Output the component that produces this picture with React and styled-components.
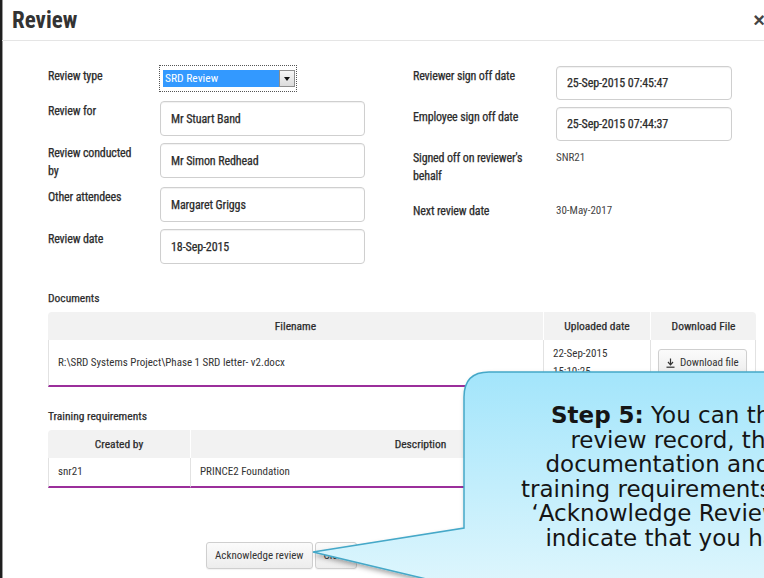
import React from 'react';
import styled, { createGlobalStyle } from 'styled-components';

const NARROW = `"Roboto Condensed", "Liberation Sans Narrow", "Arial Narrow", Roboto, sans-serif`;
const CALLOUT_FONT = `"DejaVu Sans", Verdana, sans-serif`;

const GlobalStyle = createGlobalStyle`
  html, body {
    margin: 0;
    padding: 0;
    background: #fff;
  }
  body {
    overflow: hidden;
    font-family: ${NARROW};
    font-stretch: condensed;
    font-size: 12px;
    color: #333;
  }
`;

const Screen = styled.div`
  position: relative;
  width: 764px;
  height: 578px;
  overflow: hidden;
`;

const Modal = styled.div`
  width: 778px;
  height: 100%;
  border-left: 2px solid #1f1f1f;
  box-shadow: inset 1px 0 0 #9a9a9a;
  background: #fff;
`;

const ModalHeader = styled.div`
  display: flex;
  align-items: center;
  justify-content: space-between;
  height: 41px;
  box-sizing: border-box;
  padding: 0 15px 0 10px;
  border-bottom: 1px solid #e5e5e5;
`;

const Title = styled.h4`
  margin: 0;
  font: bold 23px ${NARROW};
  font-stretch: condensed;
  line-height: 1;
  color: #333;
`;

const CloseMark = styled.span`
  font: bold 20px "Liberation Sans", sans-serif;
  line-height: 1;
  color: #444;
`;

const ModalBody = styled.div`
  padding: 25px 24px 0 46px;
`;

const FormGrid = styled.div`
  display: grid;
  grid-template-columns: 354px 1fr;
`;

const Column = styled.div`
  display: flex;
  flex-direction: column;
  padding-left: ${(p) => p.indent || 0}px;
`;

const Field = styled.div`
  display: grid;
  grid-template-columns: ${(p) => p.labelWidth}px ${(p) => p.fieldWidth}px;
  min-height: ${(p) => p.minHeight || 0}px;
  margin-bottom: 7px;
`;

/* medium-weight condensed text used by labels, inputs and headings */
const Label = styled.div`
  padding: 1px 22px 0 0;
  font-size: 12px;
  letter-spacing: -0.15px;
  line-height: 18px;
  color: #2b2b2b;
  -webkit-text-stroke: 0.25px #2b2b2b;
`;

const StaticValue = styled.div`
  padding-top: 1px;
  font-size: 11px;
  line-height: 18px;
  color: #444;
`;

const TextInput = styled.input`
  box-sizing: border-box;
  width: 100%;
  height: ${(p) => p.h || 35}px;
  padding: 0 10px;
  border: 1px solid #cfcfcf;
  border-radius: 4px;
  box-shadow: inset 0 1px 1px rgba(0, 0, 0, 0.06);
  font: 12px ${NARROW};
  font-stretch: condensed;
  letter-spacing: -0.1px;
  color: #2b2b2b;
  -webkit-text-stroke: 0.25px #2b2b2b;
  background: #fff;
  outline: none;
`;

const SelectFocus = styled.div`
  box-sizing: border-box;
  display: flex;
  width: 138px;
  height: 27px;
  margin: -1px 0 0 -1px;
  padding: 4px 1px 4px 3px;
  border: 1px dotted #555;
`;

const SelectValue = styled.div`
  flex: 1;
  padding-left: 2px;
  font-size: 11.5px;
  line-height: 17px;
  background: #3399ff;
  color: #fff;
`;

const SelectArrow = styled.div`
  display: flex;
  align-items: center;
  justify-content: center;
  width: 14px;
  border: 1px solid #8e8e8e;
  background: linear-gradient(#f6f6f6, #dcdcdc);

  &::after {
    content: '';
    border-left: 3px solid transparent;
    border-right: 3px solid transparent;
    border-top: 4px solid #111;
  }
`;

const SectionTitle = styled.div`
  margin: ${(p) => p.top}px 0 5px 0;
  font-size: 11.5px;
  line-height: 18px;
  color: #2b2b2b;
  -webkit-text-stroke: 0.25px #2b2b2b;
`;

const DataTable = styled.table`
  width: 100%;
  table-layout: fixed;
  border-collapse: separate;
  border-spacing: 0;
  font-size: 11px;
`;

const HeadCell = styled.th`
  height: 28px;
  padding: 0 8px;
  background: #f2f2f2;
  border-left: 1px solid #fff;
  font-size: 11.5px;
  font-weight: normal;
  text-align: center;
  color: #2b2b2b;
  -webkit-text-stroke: 0.25px #2b2b2b;

  &:first-child {
    border-left: none;
    border-top-left-radius: 4px;
  }
  &:last-child {
    border-top-right-radius: 4px;
  }
`;

const Cell = styled.td`
  height: ${(p) => p.h}px;
  padding: 0 9px;
  border-left: 1px solid #e2e2e2;
  border-bottom: 2px solid #9b2f9b;
  line-height: 18px;
  vertical-align: middle;
  color: #333;

  &:last-child {
    border-right: 1px solid #e2e2e2;
  }
`;

const Button = styled.button`
  display: inline-flex;
  align-items: center;
  gap: 5px;
  height: 27px;
  margin-left: ${(p) => p.offset || 0}px;
  padding: 0 ${(p) => p.pad || 8}px;
  border: 1px solid #cfcfcf;
  border-radius: 3px;
  background: linear-gradient(#fbfbfb, #ededed);
  box-shadow: 0 1px 1px rgba(0, 0, 0, 0.05);
  font: 11px ${NARROW};
  font-stretch: condensed;
  white-space: nowrap;
  color: #333;
`;

const Footer = styled.div`
  display: flex;
  gap: 2px;
  margin-top: 54px;
  padding-left: 158px;
`;

const CalloutLayer = styled.div`
  position: absolute;
  inset: 0;
  pointer-events: none;
`;

const CalloutShape = styled.svg`
  position: absolute;
  left: 0;
  top: 0;
  overflow: visible;
`;

const CalloutText = styled.div`
  position: absolute;
  left: 464px;
  top: 372px;
  width: 422px;
  box-sizing: border-box;
  padding-top: 31px;
  font: 23px ${CALLOUT_FONT};
  line-height: 24.5px;
  text-align: center;
  color: #151515;
  white-space: nowrap;

  b {
    font-weight: bold;
  }
`;

const DownloadIcon = () => (
  <svg width="9" height="10" viewBox="0 0 9 10">
    <path d="M4.5 0.5 V6" stroke="#333" strokeWidth="1.2" />
    <path d="M2 4 L4.5 6.8 L7 4" fill="none" stroke="#333" strokeWidth="1.2" />
    <path d="M0.5 9.2 H8.5" stroke="#333" strokeWidth="1.2" />
  </svg>
);

const leftFields = [
  { label: 'Review for', value: 'Mr Stuart Band' },
  { label: 'Review conducted by', value: 'Mr Simon Redhead' },
  { label: 'Other attendees', value: 'Margaret Griggs' },
  { label: 'Review date', value: '18-Sep-2015' },
];

const Callout = () => (
  <CalloutLayer>
    <CalloutShape width="764" height="578">
      <defs>
        <linearGradient id="calloutFill" x1="0" y1="372" x2="0" y2="600" gradientUnits="userSpaceOnUse">
          <stop offset="0" stopColor="#a3e5fb" />
          <stop offset="1" stopColor="#e2f7fd" />
        </linearGradient>
        <filter id="calloutShadow" x="-20%" y="-20%" width="140%" height="140%">
          <feDropShadow dx="2" dy="3" stdDeviation="2.5" floodColor="#000" floodOpacity="0.35" />
        </filter>
      </defs>
      <path
        d="M464 397 Q464 372 489 372 L820 372 L820 640 L464 640 L464 588 L313 552 L464 528 Z"
        fill="url(#calloutFill)"
        stroke="#45a8c8"
        strokeWidth="1.5"
        filter="url(#calloutShadow)"
      />
    </CalloutShape>
    <CalloutText>
      <b>Step 5:</b> You can then
      <br />
      review record, the
      <br />
      documentation and all
      <br />
      training requirements. Use
      <br />
      ‘Acknowledge Review’ to
      <br />
      indicate that you have
    </CalloutText>
  </CalloutLayer>
);

export default function App() {
  return (
    <Screen>
      <GlobalStyle />
      <Modal>
        <ModalHeader>
          <Title>Review</Title>
          <CloseMark>×</CloseMark>
        </ModalHeader>
        <ModalBody>
          <FormGrid>
            <Column>
              <Field labelWidth={112} fieldWidth={205} minHeight={28}>
                <Label>Review type</Label>
                <SelectFocus>
                  <SelectValue>SRD Review</SelectValue>
                  <SelectArrow />
                </SelectFocus>
              </Field>
              {leftFields.map((f) => (
                <Field key={f.label} labelWidth={112} fieldWidth={205}>
                  <Label>{f.label}</Label>
                  <TextInput readOnly defaultValue={f.value} />
                </Field>
              ))}
            </Column>
            <Column indent={11}>
              <Field labelWidth={143} fieldWidth={176}>
                <Label>Reviewer sign off date</Label>
                <TextInput h={34} readOnly defaultValue="25-Sep-2015 07:45:47" />
              </Field>
              <Field labelWidth={143} fieldWidth={176}>
                <Label>Employee sign off date</Label>
                <TextInput h={34} readOnly defaultValue="25-Sep-2015 07:44:37" />
              </Field>
              <Field labelWidth={143} fieldWidth={176} minHeight={46}>
                <Label>Signed off on reviewer's behalf</Label>
                <StaticValue>SNR21</StaticValue>
              </Field>
              <Field labelWidth={143} fieldWidth={176}>
                <Label>Next review date</Label>
                <StaticValue>30-May-2017</StaticValue>
              </Field>
            </Column>
          </FormGrid>

          <SectionTitle top={18}>Documents</SectionTitle>
          <DataTable>
            <colgroup>
              <col style={{ width: 495 }} />
              <col style={{ width: 107 }} />
              <col style={{ width: 106 }} />
            </colgroup>
            <thead>
              <tr>
                <HeadCell>Filename</HeadCell>
                <HeadCell>Uploaded date</HeadCell>
                <HeadCell>Download File</HeadCell>
              </tr>
            </thead>
            <tbody>
              <tr>
                <Cell h={45}>R:\SRD Systems Project\Phase 1 SRD letter- v2.docx</Cell>
                <Cell h={45}>
                  22-Sep-2015
                  <br />
                  15:10:25
                </Cell>
                <Cell h={45}>
                  <Button pad={7} offset={-2}>
                    <DownloadIcon />
                    Download file
                  </Button>
                </Cell>
              </tr>
            </tbody>
          </DataTable>

          <SectionTitle top={20}>Training requirements</SectionTitle>
          <DataTable>
            <colgroup>
              <col style={{ width: 142 }} />
              <col style={{ width: 460 }} />
              <col style={{ width: 106 }} />
            </colgroup>
            <thead>
              <tr>
                <HeadCell>Created by</HeadCell>
                <HeadCell>Description</HeadCell>
                <HeadCell />
              </tr>
            </thead>
            <tbody>
              <tr>
                <Cell h={28}>snr21</Cell>
                <Cell h={28}>PRINCE2 Foundation</Cell>
                <Cell h={28} />
              </tr>
            </tbody>
          </DataTable>

          <Footer>
            <Button>Acknowledge review</Button>
            <Button>Close</Button>
          </Footer>
        </ModalBody>
      </Modal>
      <Callout />
    </Screen>
  );
}
